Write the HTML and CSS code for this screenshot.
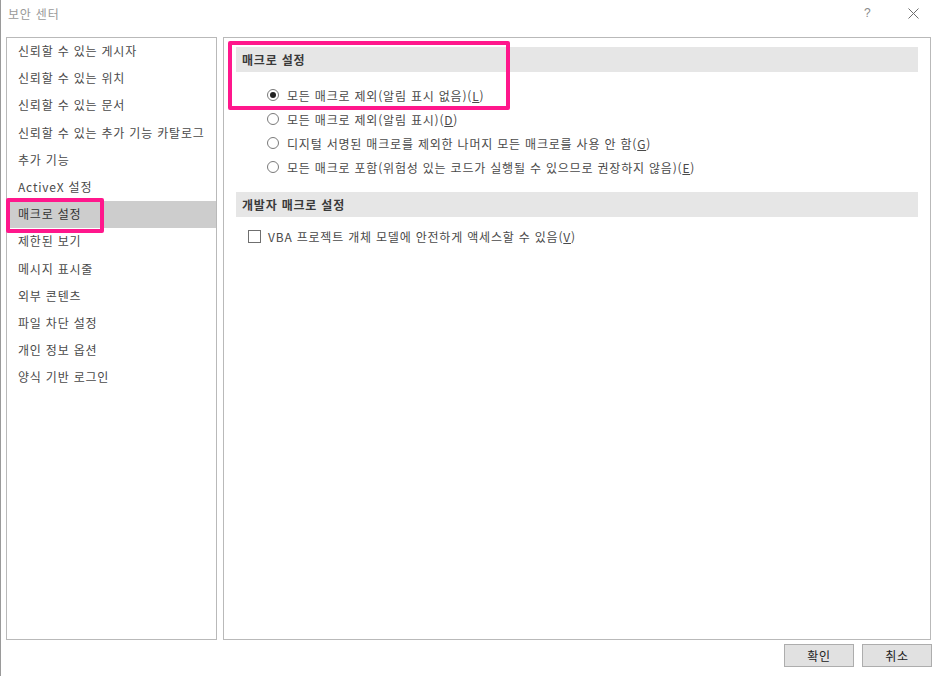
FILE: index.html
```html
<!DOCTYPE html>
<html lang="ko">
<head>
<meta charset="utf-8">
<title>보안 센터</title>
<link rel="stylesheet" href="styles.css">
</head>
<body>
<div class="window">
  <div class="titlebar">
    <span class="title">보안 센터</span>
    <span class="help">?</span>
    <span class="close">
      <svg width="11" height="11" viewBox="0 0 11 11"><path d="M0.5 0.5 L10.5 10.5 M10.5 0.5 L0.5 10.5" stroke="#6e6e6e" stroke-width="1" fill="none"/></svg>
    </span>
  </div>
  <div class="main">
    <ul class="nav">
      <li>신뢰할 수 있는 게시자</li>
      <li>신뢰할 수 있는 위치</li>
      <li>신뢰할 수 있는 문서</li>
      <li>신뢰할 수 있는 추가 기능 카탈로그</li>
      <li>추가 기능</li>
      <li>ActiveX 설정</li>
      <li class="selected">매크로 설정<span class="mark mark-nav"></span></li>
      <li>제한된 보기</li>
      <li>메시지 표시줄</li>
      <li>외부 콘텐츠</li>
      <li>파일 차단 설정</li>
      <li>개인 정보 옵션</li>
      <li>양식 기반 로그인</li>
    </ul>
    <div class="panel">
      <span class="mark mark-panel"></span>
      <div class="section-head">매크로 설정</div>
      <div class="options">
        <label class="opt"><span class="radio checked"></span><span>모든 매크로 제외(알림 표시 없음)(<u>L</u>)</span></label>
        <label class="opt"><span class="radio"></span><span>모든 매크로 제외(알림 표시)(<u>D</u>)</span></label>
        <label class="opt"><span class="radio"></span><span>디지털 서명된 매크로를 제외한 나머지 모든 매크로를 사용 안 함(<u>G</u>)</span></label>
        <label class="opt"><span class="radio"></span><span>모든 매크로 포함(위험성 있는 코드가 실행될 수 있으므로 권장하지 않음)(<u>E</u>)</span></label>
      </div>
      <div class="section-head second">개발자 매크로 설정</div>
      <label class="check-row"><span class="checkbox"></span><span>VBA 프로젝트 개체 모델에 안전하게 액세스할 수 있음(<u>V</u>)</span></label>
    </div>
  </div>
  <div class="footer">
    <button class="btn">확인</button>
    <button class="btn">취소</button>
  </div>
</div>
</body>
</html>
```

FILE: styles.css
```css
* { box-sizing: border-box; }
html, body {
  margin: 0;
  padding: 0;
  background: #ffffff;
}
body {
  font-family: "Noto Sans CJK KR", "Noto Sans", sans-serif;
  font-size: 12px;
  letter-spacing: 0.8px;
  color: #4a4a4a;
}
.window {
  width: 936px;
  height: 676px;
  border-left: 1px solid #9a9a9a;
  display: flex;
  flex-direction: column;
  background: #ffffff;
}
.titlebar {
  height: 30px;
  display: flex;
  align-items: center;
  padding-left: 7px;
  padding-bottom: 4px;
}
.title {
  color: #9a9a9a;
  font-size: 12px;
  flex: 1;
}
.help {
  color: #8a8a8a;
  font-size: 12px;
  width: 44px;
  font-family: "Liberation Sans", sans-serif;
}
.close {
  width: 28px;
  display: flex;
  align-items: center;
}
.main {
  display: flex;
  gap: 6px;
  padding: 7px 5px 0 5px;
  height: 610px;
}
.nav {
  list-style: none;
  margin: 0;
  padding: 0;
  width: 211px;
  border: 1px solid #b9b9b9;
  position: relative;
}
.nav li {
  height: 27.2px;
  line-height: 25px;
  padding-left: 11px;
  color: #4a4a4a;
  white-space: nowrap;
  position: relative;
}
.nav li.selected {
  background: #cdcdcd;
  color: #333333;
}
.mark {
  position: absolute;
  border: 4px solid #ff178c;
  border-radius: 2px;
  pointer-events: none;
}
.mark-nav {
  left: -1px;
  top: -3px;
  width: 98px;
  height: 35px;
}
.panel {
  flex: 1;
  border: 1px solid #b9b9b9;
  padding: 9px 12px 0 12px;
  position: relative;
}
.mark-panel {
  left: 4px;
  top: 3px;
  width: 282px;
  height: 69px;
}
.section-head {
  height: 25px;
  background: #e6e6e6;
  padding-left: 6px;
  line-height: 25px;
  color: #3a3a3a;
  font-weight: bold;
}
.options {
  padding: 11px 0 0 31px;
}
.opt {
  display: flex;
  align-items: center;
  height: 24px;
  gap: 8px;
}
.radio {
  width: 12px;
  height: 12px;
  border: 1px solid #7a7a7a;
  border-radius: 50%;
  display: flex;
  align-items: center;
  justify-content: center;
  flex: none;
}
.radio.checked::after {
  content: "";
  width: 6px;
  height: 6px;
  border-radius: 50%;
  background: #222222;
}
.section-head.second {
  margin-top: 13px;
}
.check-row {
  display: flex;
  align-items: center;
  height: 24px;
  margin-top: 7px;
  padding-left: 12px;
  gap: 7px;
}
.checkbox {
  width: 13px;
  height: 13px;
  border: 1px solid #6f6f6f;
  flex: none;
}
u {
  text-decoration: underline;
  text-underline-offset: 1px;
}
.footer {
  display: flex;
  justify-content: flex-end;
  gap: 8px;
  padding: 4px 4px 0 0;
}
.btn {
  width: 70px;
  height: 23px;
  background: #e1e1e1;
  border: 1px solid #adadad;
  font-family: "Noto Sans CJK KR", sans-serif;
  font-size: 12px;
  letter-spacing: 0.8px;
  color: #222222;
  padding: 0;
}
```
